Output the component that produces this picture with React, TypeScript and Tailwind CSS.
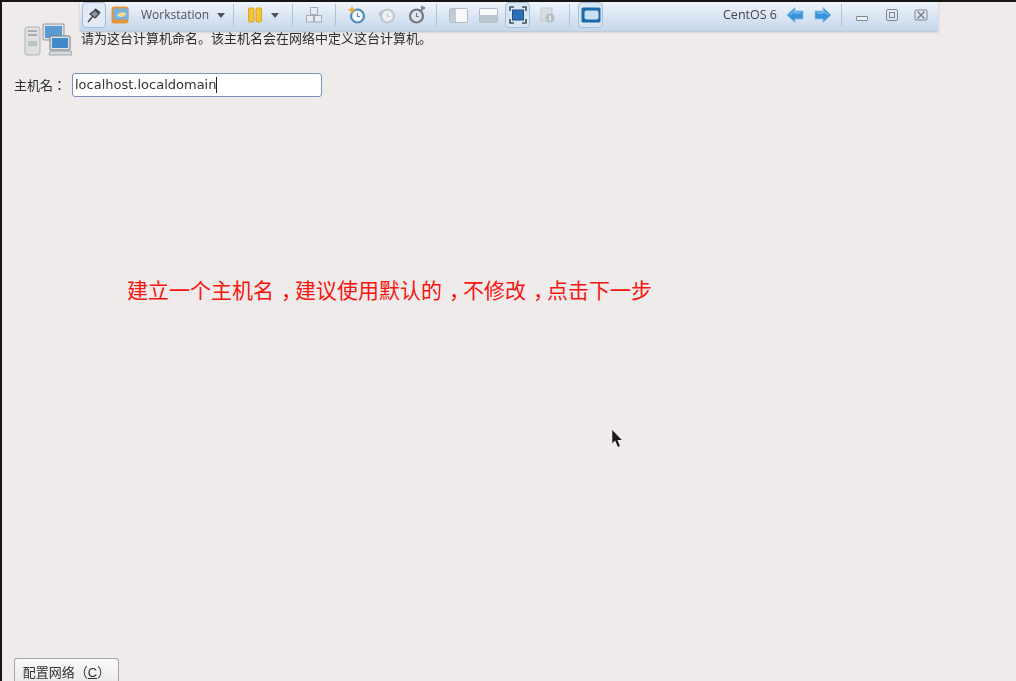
const cjk = "font-['Liberation_Sans','Noto_Sans_CJK_SC',sans-serif]";
const soft = "blur-[0.6px]";

const Divider = () => <div className="h-[22px] w-px bg-[#b3c4d8]" />;

const Arrow = ({ flip }: { flip?: boolean }) => (
  <svg width="18" height="16" viewBox="0 0 18 16" className={flip ? "-scale-x-100" : ""}>
    <path d="M1 8 L9 0.5 V4 H17 V12 H9 V15.5 Z" fill="#3a93db" stroke="#86c0ec" strokeWidth="0.8" />
    <path d="M4 8 L9 3.5 V6 H15" fill="none" stroke="#9bd0f5" strokeWidth="1" />
  </svg>
);

const PinIcon = () => (
  <svg width="16" height="16" viewBox="0 0 16 16" fill="none">
    <path d="M2 15 L7 9" stroke="#3c3f46" strokeWidth="1.3" />
    <path d="M4 7 L9 3 L13 7 L9 11 Z" fill="#8d93a0" stroke="#3f434c" strokeWidth="1.2" />
    <path d="M9 2 L14 6" stroke="#3f434c" strokeWidth="1.8" />
  </svg>
);

const VmIcon = () => (
  <svg width="18" height="18" viewBox="0 0 18 18">
    <rect x="0.5" y="0.5" width="17" height="17" rx="2.5" fill="#e8953c" />
    <rect x="2.5" y="2.5" width="15" height="11" rx="1" fill="#79b2dc" />
    <path d="M6 9.5 C8.5 5.5 13 5.5 15.5 8 C13 11 9 12 6 9.5 Z" fill="#f6dc8e" />
  </svg>
);

const Caret = () => (
  <svg width="8" height="5" viewBox="0 0 8 5"><path d="M0 0 H8 L4 5 Z" fill="#4a5263" /></svg>
);

const PauseIcon = () => (
  <svg width="16" height="16" viewBox="0 0 16 16">
    <rect x="1.5" y="1" width="5.5" height="14" rx="1" fill="#f3c635" stroke="#dd9f2e" />
    <rect x="9" y="1" width="5.5" height="14" rx="1" fill="#f3c635" stroke="#dd9f2e" />
  </svg>
);

const NetworkIcon = () => (
  <svg width="18" height="18" viewBox="0 0 18 18" fill="#e8edf3" stroke="#a6adb7">
    <rect x="5.5" y="1.5" width="7" height="7" />
    <rect x="1.5" y="9.5" width="7" height="6.5" />
    <rect x="9.5" y="9.5" width="7" height="6.5" />
  </svg>
);

const ClockIcon = ({ tone, face, star, wrench, back }: { tone: string; face: string; star?: boolean; wrench?: boolean; back?: boolean }) => (
  <svg width="20" height="20" viewBox="0 0 20 20" fill="none">
    <circle cx="10.5" cy="11" r="6.5" fill={face} stroke={tone} strokeWidth="2.2" />
    <path d="M10.5 8 V11.5 H13" stroke={tone} strokeWidth="1.1" />
    {star && <path d="M5 0.5 L6.3 3.7 L9.5 5 L6.3 6.3 L5 9.5 L3.7 6.3 L0.5 5 L3.7 3.7 Z" fill="#eda83c" />}
    {back && <path d="M1 9 L5 5 V12 Z" fill="#bcc3cb" />}
    {wrench && <path d="M14.5 7 L17 2.5 M15 1.5 L19 3.5" stroke="#7d848d" strokeWidth="2.4" />}
  </svg>
);

const PaneIcon = ({ bottom }: { bottom?: boolean }) => (
  <svg width="19" height="15" viewBox="0 0 19 15">
    <rect x="0.5" y="0.5" width="18" height="14" rx="1" fill="#f6f8fa" stroke="#b3bbc4" />
    {bottom ? <rect x="1" y="7" width="17" height="7" fill="#bcc6d0" /> : <rect x="1" y="1" width="6" height="13" fill="#c2cbd4" />}
  </svg>
);

const FullIcon = () => (
  <svg width="18" height="18" viewBox="0 0 18 18" fill="none">
    <rect x="3.5" y="4" width="11" height="10" fill="#2c72b8" stroke="#1e4f86" />
    <path d="M1 5 V1 H5 M13 1 H17 V5 M17 13 V17 H13 M5 17 H1 V13" stroke="#46505c" strokeWidth="1.6" />
  </svg>
);

const LockedIcon = () => (
  <svg width="16" height="18" viewBox="0 0 16 18">
    <rect x="1" y="2" width="11" height="13" fill="#d9dee4" stroke="#c3c9d0" />
    <circle cx="10" cy="12" r="4.5" fill="#b6bdc5" />
    <rect x="9" y="9.5" width="2" height="5" fill="#e6eaee" />
  </svg>
);

const UnityIcon = () => (
  <svg width="20" height="16" viewBox="0 0 20 16">
    <rect x="0.5" y="0.5" width="19" height="15" rx="1.5" fill="#1d6aab" />
    <rect x="3.5" y="3.5" width="14" height="9" rx="2" fill="#c7e0f3" />
  </svg>
);

const Toolbar = () => (
  <div className={`absolute left-[78px] top-0 flex h-[29px] w-[858px] items-center bg-gradient-to-b from-[#f0f5fb] to-[#c4d6ec] pb-[3px] pl-[2px] font-['Open_Sans',sans-serif] shadow-[0_1px_2px_rgba(120,140,170,0.5)] ${soft}`}>
    <div className="flex h-[26px] w-[24px] items-center justify-center rounded-sm border border-[#a5bbd4] bg-[#e2ebf5]">
      <PinIcon />
    </div>
    <div className="ml-[5px]"><VmIcon /></div>
    <span className="ml-[12px] w-[70px] text-[12px] whitespace-nowrap text-[#4b5360]">Workstation</span>
    <div className="ml-[6px]"><Caret /></div>
    <div className="ml-[8px]"><Divider /></div>
    <div className="ml-[13px]"><PauseIcon /></div>
    <div className="ml-[8px]"><Caret /></div>
    <div className="ml-[13px]"><Divider /></div>
    <div className="ml-[12px]"><NetworkIcon /></div>
    <div className="ml-[12px]"><Divider /></div>
    <div className="ml-[11px]"><ClockIcon tone="#4f8dbf" face="#f3f6f9" star /></div>
    <div className="ml-[10px]"><ClockIcon tone="#c1c7ce" face="#eef1f4" back /></div>
    <div className="ml-[9px]"><ClockIcon tone="#6f7882" face="#dfe5eb" wrench /></div>
    <div className="ml-[10px]"><Divider /></div>
    <div className="ml-[12px]"><PaneIcon /></div>
    <div className="ml-[11px]"><PaneIcon bottom /></div>
    <div className="ml-[7px] flex h-[26px] w-[25px] items-center justify-center rounded-sm border border-[#a9bfd8] bg-[#d8e5f3]">
      <FullIcon />
    </div>
    <div className="ml-[10px]"><LockedIcon /></div>
    <div className="ml-[13px]"><Divider /></div>
    <div className="ml-[8px] flex h-[26px] w-[25px] items-center justify-center rounded-sm border border-[#a9bfd8] bg-[#d8e5f3]">
      <UnityIcon />
    </div>
    <span className="ml-auto text-[12.5px] text-[#3f4650]">CentOS 6</span>
    <div className="ml-[9px]"><Arrow /></div>
    <div className="ml-[10px]"><Arrow flip /></div>
    <div className="ml-[9px]"><Divider /></div>
    <div className="ml-[14px] mt-[6px] h-[5px] w-[12px] rounded-[1px] border border-[#7f8790] bg-[#eef1f4]" />
    <div className="ml-[18px] flex h-[12px] w-[12px] items-center justify-center rounded-[2px] border border-[#7f8790]">
      <div className="h-[6px] w-[6px] border border-[#7f8790]" />
    </div>
    <svg width="14" height="12" viewBox="0 0 14 12" className="ml-[16px] mr-[10px]" fill="none" stroke="#7f8790" strokeWidth="1.6">
      <rect x="1" y="1" width="12" height="10" rx="1" strokeWidth="1" />
      <path d="M3.5 2.5 L10.5 9.5 M10.5 2.5 L3.5 9.5" />
    </svg>
  </div>
);

const ComputerIcon = () => (
  <svg width="48" height="34" viewBox="0 0 48 34" fill="none">
    {/* tower */}
    <rect x="1" y="4" width="15" height="28" rx="2" fill="#dfdfdf" stroke="#b0b3b6" />
    <path d="M4 8 H13 M4 12 H13" stroke="#9a9ea2" strokeWidth="1.5" />
    <rect x="4" y="18" width="9" height="5" fill="#bfc2c5" />
    {/* back monitor */}
    <rect x="19" y="1" width="21" height="16" rx="1" fill="#dfe3e6" stroke="#8f979e" />
    <rect x="21" y="3" width="17" height="12" fill="#5b9bd2" />
    {/* front monitor */}
    <rect x="26" y="13" width="20" height="14" rx="1" fill="#dfe3e6" stroke="#6f7880" />
    <rect x="28" y="15" width="16" height="10" fill="#3f8ac6" />
    <path d="M26 28 H47 L48 32 H25 Z" fill="#d8dadc" stroke="#8c9094" strokeWidth="0.7" />
  </svg>
);

const Cursor = () => (
  <svg width="12" height="18" viewBox="0 0 12 19">
    <path d="M1 0 L1 14 L4 11 L7 18 L9 17 L6.5 10.5 L11 10.5 Z" fill="#1b1b1b" />
  </svg>
);

// the capture shows the fullwidth comma centred in its cell
const Comma = () => <span className="ml-[7px] tracking-[-7px]">，</span>;

export default function App() {
  return (
    <div className={`relative flex h-[681px] w-[1016px] flex-col overflow-hidden border-l-2 border-t-2 border-l-[#161616] border-t-[#161616] bg-[#eeebea] ${cjk}`}>
      <Toolbar />

      {/* header */}
      <div className={`ml-[22px] mt-[21px] flex items-start ${soft}`}>
        <ComputerIcon />
        <p className="ml-[9px] mt-[8px] whitespace-nowrap text-[13px] leading-[16px] text-[#2e2e2e]">
          请为这台计算机命名。该主机名会在网络中定义这台计算机。
        </p>
      </div>

      {/* hostname row */}
      <div className={`ml-[12px] mt-[16px] flex items-center ${soft}`}>
        <span className="w-[58px] font-['Noto_Sans_CJK_TC',sans-serif] text-[13px] text-[#2e2e2e]">主机名：</span>
        <div className="flex h-[24px] w-[250px] items-center rounded-[3px] border border-[#7d94b8] bg-white pl-[2px] font-['DejaVu_Sans',sans-serif] text-[13px] text-[#333]">
          localhost.localdomain
          <span className="h-[16px] w-px bg-[#222]" />
        </div>
      </div>

      {/* annotation */}
      <p className="ml-[125px] mt-[180px] whitespace-nowrap text-[21px] leading-[28px] text-[#f8140f]">
        建立一个主机名<Comma />建议使用默认的<Comma />不修改<Comma />点击下一步
      </p>

      <div className={`absolute left-[609px] top-[428px] ${soft}`}><Cursor /></div>

      {/* bottom button */}
      <div className={`ml-[12px] mt-auto flex h-[23px] w-[105px] items-start justify-center rounded-t-[3px] border border-b-0 border-[#a5a5a5] bg-gradient-to-b from-[#fbfbfb] to-[#ecebea] pt-[6px] text-[13px] leading-[16px] text-[#333] ${soft}`}>
        <span className="whitespace-nowrap">配置网络（<span className="underline">C</span>）</span>
      </div>
    </div>
  );
}
